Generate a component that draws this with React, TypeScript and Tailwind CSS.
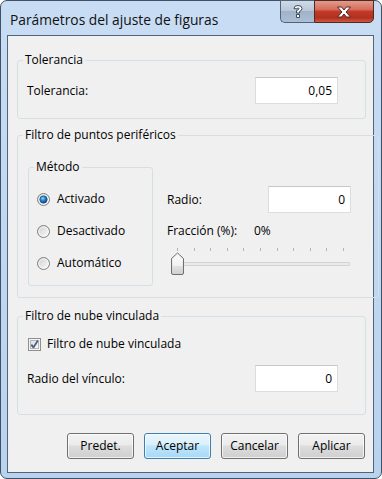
import React from 'react';

const ui = "font-['Open_Sans',sans-serif] text-[12px] text-black";

function Field({ value }: { value: string }) {
  return (
    <div className="w-[83px] h-[27px] bg-white border border-[#dadde2] border-t-[#c4c8cd] flex items-center justify-end pr-[5px] leading-none">
      {value}
    </div>
  );
}

function Radio({ checked }: { checked?: boolean }) {
  return (
    <svg width="13" height="13" viewBox="0 0 13 13" className="shrink-0">
      <defs>
        <linearGradient id="rb" x1="0" y1="0" x2="1" y2="1">
          <stop offset="0" stopColor="#cfcfcf" />
          <stop offset="1" stopColor="#fbfbfb" />
        </linearGradient>
        <radialGradient id="rd" cx="0.4" cy="0.35" r="0.7">
          <stop offset="0" stopColor="#8ad6fa" />
          <stop offset="0.5" stopColor="#1d7ec7" />
          <stop offset="1" stopColor="#0b3f7a" />
        </radialGradient>
      </defs>
      <circle cx="6.5" cy="6.5" r="6" fill="url(#rb)" stroke="#7f8080" />
      <circle cx="6.5" cy="6.5" r="4.6" fill="none" stroke="#ffffff" strokeOpacity="0.6" />
      {checked && <circle cx="6.5" cy="6.5" r="3.7" fill="url(#rd)" stroke="#1b4e86" strokeWidth="0.7" />}
    </svg>
  );
}

function Checkbox() {
  return (
    <svg width="13" height="13" viewBox="0 0 13 13" className="shrink-0">
      <defs>
        <linearGradient id="cb" x1="0" y1="0" x2="1" y2="1">
          <stop offset="0" stopColor="#dcdcdc" />
          <stop offset="1" stopColor="#fcfcfc" />
        </linearGradient>
      </defs>
      <rect x="0.5" y="0.5" width="12" height="12" fill="#f4f4f4" stroke="#8e8f8f" />
      <rect x="2.5" y="2.5" width="8" height="8" fill="url(#cb)" stroke="#b3b8bd" />
      <path d="M3.3 6.6 L5.4 9.4 L9.9 2.4" fill="none" stroke="#4d6185" strokeWidth="1.8" strokeLinejoin="round" />
    </svg>
  );
}

function Slider() {
  const ticks = Array.from({ length: 11 }, (_, i) => Math.round(8 + i * 16.6) + 0.5);
  return (
    <svg width="182" height="28" viewBox="0 0 182 28">
      <defs>
        <linearGradient id="th" x1="0" y1="0" x2="0" y2="1">
          <stop offset="0" stopColor="#f6f6f6" />
          <stop offset="0.5" stopColor="#e6e6e6" />
          <stop offset="1" stopColor="#cfcfcf" />
        </linearGradient>
      </defs>
      {ticks.map((x) => (
        <line key={x} x1={x} y1="0" x2={x} y2="3" stroke="#b4b4b4" />
      ))}
      <rect x="8.5" y="14.5" width="172" height="3" fill="#e8ebeb" stroke="#d3d3d3" />
      <path
        d="M8.5 5 L14.5 10.5 L14.5 25 Q14.5 26.5 13 26.5 L4 26.5 Q2.5 26.5 2.5 25 L2.5 10.5 Z"
        fill="url(#th)"
        stroke="#6f6f6f"
      />
      <path d="M8.5 6.5 L13.4 11 L13.4 18 L3.6 18 L3.6 11 Z" fill="#ffffff" fillOpacity="0.5" />
    </svg>
  );
}

function Button({ label, primary }: { label: string; primary?: boolean }) {
  const face = primary
    ? 'border-[#3c7fb1] bg-[linear-gradient(#eaf6fd_0%,#d9f0fc_45%,#bee6fd_50%,#a7d9f5_100%)]'
    : 'border-[#707070] bg-[linear-gradient(#f2f2f2_0%,#ebebeb_45%,#dddddd_50%,#cfcfcf_100%)]';
  return (
    <div
      className={`w-[67px] h-[26px] rounded-[3px] border flex items-center justify-center shadow-[inset_0_0_0_1px_rgba(255,255,255,0.7)] ${face}`}
    >
      {label}
    </div>
  );
}

export default function App() {
  return (
    <div className={`w-[382px] h-[479px] ${ui}`}>
      <div className="w-full h-full flex flex-col border border-[#3f5167] rounded-t-[7px] rounded-b-[7px] bg-[linear-gradient(#c8ddf4,#b9d2ee)]">
        {/* title bar */}
        <div className="h-[34px] flex items-start shrink-0">
          <div className="pl-[9px] pt-[10px] text-[13.8px] leading-[18px] text-[#111]">Parámetros del ajuste de figuras</div>
          <div className="ml-auto mr-[7px] -mt-[1px] flex">
            <div className="w-[34px] h-[23px] border border-[#50637a] border-r-0 rounded-bl-[5px] bg-[linear-gradient(#cfdae7_0%,#b9c8da_45%,#9fb2c8_50%,#adbfd4_100%)] flex items-center justify-center">
              <svg width="12" height="15" viewBox="0 0 12 15">
                <path
                  d="M2 4.5 Q2 1.5 6 1.5 Q10 1.5 10 4.5 Q10 6.5 7.5 7.5 L7.5 9 L4.5 9 L4.5 6.5 Q7 5.8 7 4.6 Q7 4 6 4 Q5 4 5 5 Z M4.5 10.5 L7.5 10.5 L7.5 13.5 L4.5 13.5 Z"
                  fill="#ffffff"
                  stroke="#3c4b5d"
                  strokeWidth="1"
                  strokeLinejoin="round"
                />
              </svg>
            </div>
            <div className="w-[60px] h-[23px] border border-[#4e2a25] rounded-br-[5px] bg-[linear-gradient(#e39a8b_0%,#d66e5e_40%,#c23a28_50%,#b3301f_80%,#d0573f_100%)] flex items-center justify-center">
              <svg width="16" height="12" viewBox="0 0 16 12">
                <path
                  d="M1.5 1 L5.5 1 L8 4 L10.5 1 L14.5 1 L10 6 L14.5 11 L10.5 11 L8 8 L5.5 11 L1.5 11 L6 6 Z"
                  fill="#ffffff"
                  stroke="#4a2a26"
                  strokeWidth="1"
                  strokeLinejoin="round"
                />
              </svg>
            </div>
          </div>
        </div>

        {/* client area */}
        <div className="ml-[6px] mr-[7px] mb-[5px] flex-1 border border-[#51647b] bg-[#f0f0f0] pl-[9px] pr-[7px] flex flex-col">
          <fieldset className="mt-[16px] border border-[#d5dfe5] rounded-[3px]">
            <legend className="ml-[5px] px-[2px] leading-[16px]">Tolerancia</legend>
            <div className="flex items-center justify-between pl-[9px] pr-[27px] pt-[9px] pb-[14px]">
              <span>Tolerancia:</span>
              <Field value="0,05" />
            </div>
          </fieldset>

          <fieldset className="mt-[8px] border border-[#d5dfe5] rounded-[3px]">
            <legend className="ml-[5px] px-[2px] leading-[16px]">Filtro de puntos periféricos</legend>
            <div className="flex items-start pl-[10px] pr-[27px] pt-[16px] pb-[11px]">
              <fieldset className="w-[125px] border border-[#d5dfe5] rounded-[3px]">
                <legend className="ml-[5px] px-[2px] leading-[16px]">Método</legend>
                <div className="flex flex-col pl-[8px] pt-[8px] pb-[6px]">
                  {[
                    ['Activado', true],
                    ['Desactivado', false],
                    ['Automático', false],
                  ].map(([t, c]) => (
                    <div key={t as string} className="h-[32px] flex items-center gap-[7px]">
                      <Radio checked={c as boolean} />
                      <span>{t as string}</span>
                    </div>
                  ))}
                </div>
              </fieldset>
              <div className="ml-[14px] mt-[27px] flex-1 flex flex-col">
                <div className="flex items-center justify-between">
                  <span>Radio:</span>
                  <Field value="0" />
                </div>
                <div className="mt-[10px] h-[16px] flex items-center">
                  <span className="w-[87px]">Fracción (%):</span>
                  <span>0%</span>
                </div>
                <div className="mt-[9px] ml-[2px] flex">
                  <Slider />
                </div>
              </div>
            </div>
          </fieldset>

          <fieldset className="mt-[10px] border border-[#d5dfe5] rounded-[3px]">
            <legend className="ml-[5px] px-[2px] leading-[16px]">Filtro de nube vinculada</legend>
            <div className="flex flex-col pl-[9px] pr-[27px] pt-[12px] pb-[22px]">
              <div className="h-[16px] flex items-center gap-[6px] pl-[1px]">
                <Checkbox />
                <span>Filtro de nube vinculada</span>
              </div>
              <div className="mt-[13px] flex items-center justify-between">
                <span>Radio del vínculo:</span>
                <Field value="0" />
              </div>
            </div>
          </fieldset>

          <div className="mt-[18px] flex justify-end gap-[10px] pr-[1px]">
            <Button label="Predet." />
            <Button label="Aceptar" primary />
            <Button label="Cancelar" />
            <Button label="Aplicar" />
          </div>
        </div>
      </div>
    </div>
  );
}
